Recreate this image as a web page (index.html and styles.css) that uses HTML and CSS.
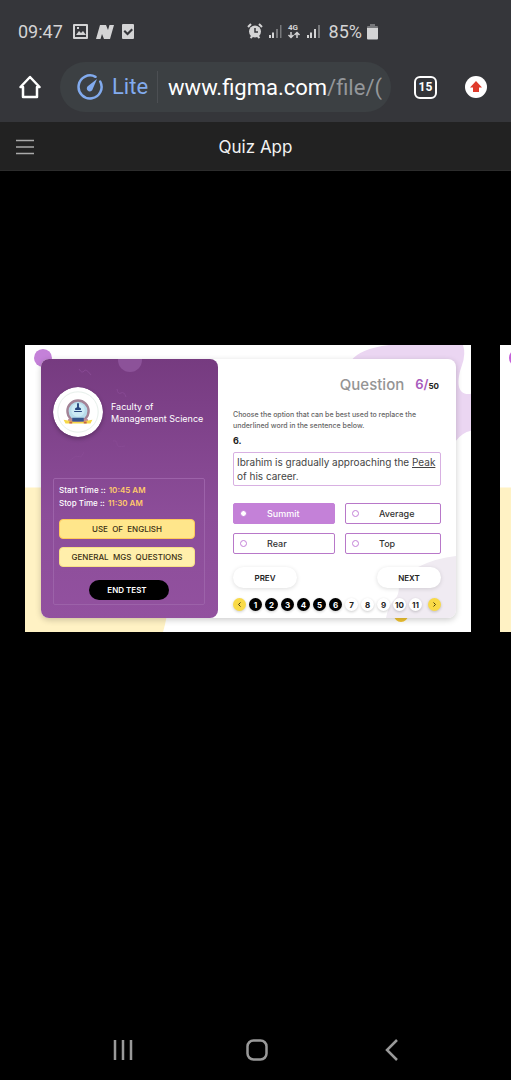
FILE: index.html
```html
<!DOCTYPE html>
<html lang="en">
<head>
<meta charset="utf-8">
<meta name="viewport" content="width=device-width, initial-scale=1">
<title>Quiz App</title>
<link rel="stylesheet" href="styles.css">
</head>
<body>
<div class="screen">
  <header class="browser">
    <div class="status">
      <span class="status-text">09:47</span>
      <svg class="status-icons-left" width="62" height="16" viewBox="0 0 62 16" aria-hidden="true">
        <path fill="#d4d4d5" fill-rule="evenodd" d="M1 0h13q1 0 1 1v13q0 1-1 1H1q-1 0-1-1V1Q0 0 1 0zM2 2v11h11V2zM3 11l3-4 2 2 2-2 3 4zM4 3h2v2H4z"/>
        <path fill="#d4d4d5" d="M27 1h6l2 5 1.500-5H41l-4 14h-6l-2-5-1.500 5H23z"/>
        <path fill="#d4d4d5" fill-rule="evenodd" d="M50 0h10q1 0 1 1v13q0 1-1 1H50q-1 0-1-1V1q0-1 1-1zM52 6l-1.500 1.500 4 4 5.500-5.500L58.500 4.500l-4 4z"/>
      </svg>
      <svg class="status-icons-right" width="76" height="18" viewBox="0 0 76 18" aria-hidden="true">
        <g fill="none" stroke="#d4d4d5" stroke-width="2">
          <path d="M1 4l3-3M12 1l3 3M3.500 15l2-2M12.500 15l-2-2"/>
        </g>
        <circle cx="8" cy="8.500" r="6" fill="#d4d4d5"/>
        <path d="M8 5v4h3" fill="none" stroke="#35363a" stroke-width="1.500"/>
        <path fill="#d4d4d5" d="M22 12h2v3h-2zM25 9.500h2V15h-2z"/>
        <path fill="#77787b" d="M29 6h2v9h-2zM33 2h1.500v13H33z"/>
        <text class="network" x="41" y="7">4G</text>
        <path fill="none" stroke="#d4d4d5" stroke-width="1.500" d="M44 9v5M41.500 12l2.500 2.500 2.500-2.500M50 15v-5M47.500 12l2.500-2.500 2.500 2.500"/>
        <path fill="#d4d4d5" d="M60 12h2v3h-2zM63 9.500h2V15h-2zM67 6h2v9h-2z"/>
        <path fill="#77787b" d="M71 2h2v13h-2z"/>
      </svg>
      <span class="status-text">85%</span>
      <svg width="11" height="16" viewBox="0 0 11 16" aria-hidden="true"><path fill="#77787b" d="M3 0h5v2h2q1 0 1 1v2H0V3q0-1 1-1h2z"/><path fill="#d4d4d5" d="M0 4h11v10.500q0 1-1 1H1q-1 0-1-1z"/></svg>
    </div>
    <div class="toolbar">
      <button class="icon-button" aria-label="Home">
        <svg width="22" height="24" viewBox="0 0 22 24"><path d="M4 12H1.500L11 2l9.500 10H18v10H4z" fill="none" stroke="#fff" stroke-width="2.500" stroke-linejoin="round"/></svg>
      </button>
      <button class="address">
        <svg width="26" height="26" viewBox="0 0 26 26" aria-hidden="true"><path d="M18.500 2.800A11.500 11.500 0 1 0 23.200 7.500" fill="none" stroke="#82abee" stroke-width="2.500" stroke-linecap="round"/><path fill="#82abee" d="M20 5l-9 7a3 3 0 1 0 4.200 4.200z"/></svg>
        <span class="lite">Lite</span>
        <span class="url">www.figma.com<span class="url-path">/file/(</span></span>
      </button>
      <button class="icon-button tabs" aria-label="15 open tabs">15</button>
      <button class="icon-button update" aria-label="Update available">
        <svg width="12" height="12" viewBox="0 0 12 12"><path fill="#df3b2c" d="M6 0l6 6.500H9V11H3V6.500H0z"/></svg>
      </button>
    </div>
  </header>

  <div class="app-bar">
    <button class="menu" aria-label="Menu"><svg width="18" height="16" viewBox="0 0 18 16"><path d="M0 1.500h18M0 8h18M0 14.500h18" stroke="#aaa" stroke-width="1.500"/></svg></button>
    <h1 class="app-title">Quiz App</h1>
  </div>

  <main class="canvas">
    <section class="frame">
      <svg class="backdrop" viewBox="0 0 446 288" preserveAspectRatio="none" aria-hidden="true">
        <path fill="#fff2c4" d="M0 143h130v80q20 25 8 65H0z"/>
        <circle cx="18" cy="13" r="9" fill="#c481d8"/>
        <path fill="#ebd6f2" d="M326 16Q334 4 364 0h74q3 9-1 20c-6 17-5 31 9 29v37q-9 2-15 10l-20-70z"/>
        <circle cx="376" cy="271" r="7" fill="#f3c632"/>
      </svg>
      <article class="card">
        <aside class="panel">
          <svg class="panel-art" viewBox="0 0 177 120" aria-hidden="true">
            <circle cx="89" cy="1" r="12" fill="#8c5299"/>
            <g fill="none" stroke="#884a94" stroke-width="1"><path d="M38 10q3 5 5 2t7 4M76 30q1 6 4 4t5 4M72 82q4-1 4 3t8 2M28 102l7-5 5 1 3-5"/></g>
          </svg>
          <div class="faculty">
            <svg class="crest" viewBox="0 0 52 52" aria-hidden="true">
              <circle cx="26" cy="26" r="26" fill="#fff"/>
              <circle cx="26" cy="26" r="21" fill="none" stroke="#e5eee9"/>
              <circle cx="26" cy="25" r="11" fill="#b8ddeb" stroke="#a38396" stroke-width="2.500"/>
              <circle cx="26" cy="24" r="7" fill="#cdebf5"/>
              <path fill="#28477f" d="M25 17h2v4l2 1v2h-6v-2l2-1zM22 25h8v1h-8z"/>
              <path fill="#c08b94" d="M16 33h20l1 4H15z"/>
              <path fill="#f6d849" d="M11 34l6 1q9 3 18 0l6-1-2 4H13z"/>
              <path fill="#c5654a" d="M17 36h3v2h-3zM32 36h3v2h-3z"/>
              <path fill="#36568c" d="M20 32h12v4H20z"/>
            </svg>
            <h2 class="faculty-name">Faculty of<br>Management Science</h2>
          </div>
          <div class="session">
            <p class="time">Start Time :: <strong>10:45 AM</strong></p>
            <p class="time">Stop Time :: <strong>11:30 AM</strong></p>
            <div class="subjects">
              <button class="subject subject-active">USE&nbsp; OF&nbsp; ENGLISH</button>
              <button class="subject">GENERAL&nbsp; MGS&nbsp; QUESTIONS</button>
            </div>
            <button class="end-test">END TEST</button>
          </div>
        </aside>
        <form class="quiz">
          <svg class="quiz-art" viewBox="0 0 70 62" aria-hidden="true"><path fill="#f0ebf2" d="M0 62q2-12 9-19 4-4 4-13 1-14 19-19Q50 2 70 0v62z"/></svg>
          <h2 class="progress">Question <span class="count"><span class="current">6/</span><span class="total">50</span></span></h2>
          <p class="prompt">Choose the option that can be best used to replace the<br>underlined word in the sentence below.</p>
          <p class="number">6.</p>
          <p class="sentence">Ibrahim is gradually approaching the <u>Peak</u><br>of his career.</p>
          <div class="options">
            <label class="option option-active"><input type="radio" name="answer" checked><span>Summit</span></label>
            <label class="option"><input type="radio" name="answer"><span>Average</span></label>
            <label class="option"><input type="radio" name="answer"><span>Rear</span></label>
            <label class="option"><input type="radio" name="answer"><span>Top</span></label>
          </div>
          <div class="steps"><button type="button" class="step">PREV</button><button type="button" class="step">NEXT</button></div>
          <nav class="pager" aria-label="Questions">
            <button type="button" class="page arrow" aria-label="Earlier questions"><svg width="5" height="5" viewBox="0 0 5 5"><path d="M3.500 .5l-2 2 2 2" fill="none" stroke="#4b3c08"/></svg></button>
            <button type="button" class="page done">1</button>
            <button type="button" class="page done">2</button>
            <button type="button" class="page done">3</button>
            <button type="button" class="page done">4</button>
            <button type="button" class="page done">5</button>
            <button type="button" class="page done">6</button>
            <button type="button" class="page">7</button>
            <button type="button" class="page">8</button>
            <button type="button" class="page">9</button>
            <button type="button" class="page">10</button>
            <button type="button" class="page">11</button>
            <button type="button" class="page arrow last" aria-label="Later questions"><svg width="5" height="5" viewBox="0 0 5 5"><path d="M1.500 .5l2 2-2 2" fill="none" stroke="#4b3c08"/></svg></button>
          </nav>
        </form>
      </article>
    </section>
    <section class="frame" aria-label="Next screen">
      <svg class="backdrop" viewBox="0 0 446 288" preserveAspectRatio="none" aria-hidden="true">
        <path fill="#fff2c4" d="M0 143h130v145H0z"/>
        <circle cx="18" cy="13" r="9" fill="#c45fd8"/>
      </svg>
    </section>
  </main>

  <nav class="system-nav" aria-label="System">
    <button class="icon-button" aria-label="Recent apps"><svg width="22" height="24" viewBox="0 0 22 24"><path d="M3 2v20M11 2v20M19 2v20" stroke="#999" stroke-width="2.500"/></svg></button>
    <button class="icon-button" aria-label="Home screen"><svg width="22" height="24" viewBox="0 0 22 24"><rect x="1.500" y="2.500" width="19" height="19" rx="6" fill="none" stroke="#999" stroke-width="2.500"/></svg></button>
    <button class="icon-button" aria-label="Back"><svg width="22" height="24" viewBox="0 0 22 24"><path d="M16 2L6 12l10 10" fill="none" stroke="#999" stroke-width="2.500"/></svg></button>
  </nav>
</div>
</body>
</html>
```
FILE: styles.css
```css
* { box-sizing: border-box; }
body { margin: 0; background: #000; font-family: Roboto, sans-serif; }
h1, h2, p { margin: 0; font-weight: 400; }
button { margin: 0; padding: 0; border: 0; background: none; color: inherit; font: inherit; white-space: nowrap; }
svg { display: block; flex: none; }

.screen { display: flex; flex-direction: column; min-height: 100vh; overflow: hidden; }

.browser { background: #35363a; padding-bottom: 10px; }
.status { display: flex; align-items: center; height: 62px; padding: 2px 18px 0; color: #d4d4d5; }
.status-text { font-size: 18px; line-height: 20px; }
.status-icons-left { margin-left: 10px; margin-right: auto; }
.status-icons-right { margin-right: 6px; }
.status-text + svg:last-child { margin-left: 5px; margin-right: 115px; }
.network { fill: #d4d4d5; font-size: 8px; font-weight: 700; }

.toolbar { display: flex; align-items: center; padding: 0 24px 0 19px; }
.icon-button { display: flex; align-items: center; justify-content: center; width: 22px; height: 24px; flex: none; }
.address { display: flex; align-items: center; flex: 1; min-width: 0; height: 50px; margin: 0 23px 0 19px; padding: 0 8px 0 17px; border-radius: 25px; background: #3c4043; color: #fff; font-size: 22px; text-align: left; }
.lite { margin-left: 9px; padding-right: 9px; border-right: 1px solid #4c4f53; color: #82abee; line-height: 32px; }
.url { flex: 1; margin-left: 10px; }
.url-path { color: #94979a; }
.tabs { width: 23px; height: 23px; border: 2px solid #fff; border-radius: 6px; color: #fff; font-size: 12px; font-weight: 700; }
.update { height: 22px; margin-left: 28px; border-radius: 50%; background: #fff; }

.app-bar { display: grid; grid-template-columns: 18px 1fr 18px; align-items: center; height: 49px; padding: 1px 16px 0; background: #222; border-bottom: 1px solid #2c2c2c; }
.app-title { color: #f2f2f2; font-family: Inter, sans-serif; font-size: 17px; line-height: 24px; text-align: center; }

.canvas { display: flex; align-items: flex-start; flex: 1; gap: 29px; padding: 174px 0 40px 25px; font-family: Inter, sans-serif; }
.frame { position: relative; flex: 0 0 calc(100% - 40px); min-height: 287px; padding: 14px 15px 14px 16px; background: #fff; }
.backdrop { position: absolute; inset: 0; width: 100%; height: 100%; }
.card { position: relative; display: flex; border-radius: 8px; background: #fff; box-shadow: 0 2px 6px #0003; }

.panel { position: relative; flex: 0 0 177px; padding: 27px 13px 13px 12px; border-radius: 8px; background: linear-gradient(#763b80, #8c4d99 60%, #92519f); color: #fff; overflow: hidden; }
.panel-art { position: absolute; top: 0; left: 0; width: 100%; }
.faculty { position: relative; display: flex; align-items: center; gap: 8px; height: 51px; margin-bottom: 41px; white-space: nowrap; }
.crest { width: 50px; height: 50px; border-radius: 50%; box-shadow: 0 2px 4px #0004; }
.faculty-name { padding-top: 2px; font-size: 9px; font-weight: 400; line-height: 12px; }
.session { padding: 5px 9px 4px 5px; border: 1px solid #9c62a9; border-radius: 2px; }
.time { font-size: 8px; font-weight: 500; line-height: 13px; }
.time strong { margin-left: 1px; color: #ffc96b; font-weight: 600; }
.subjects { display: grid; gap: 8px; margin-top: 9px; }
.subject { height: 20px; border: 1px solid #f7df86; border-radius: 4px; background: #ffefab; color: #3b3014; font-size: 8px; font-weight: 500; }
.subject-active { border-color: #ffc95a; background: #ffe68b; }
.end-test { display: block; width: 80px; height: 20px; margin: 13px auto 0 30px; padding-right: 4px; border-radius: 10px; background: #000; font-size: 8px; font-weight: 600; }

.quiz { position: relative; flex: 1; min-width: 0; padding: 16px 15px 7px; color: #333; }
.quiz-art { position: absolute; right: 0; bottom: 0; width: 70px; height: 62px; border-radius: 0 0 8px 0; }
.quiz > :not(.quiz-art) { position: relative; }
.progress { display: flex; align-items: center; justify-content: flex-end; gap: 11px; height: 20px; padding-right: 2px; color: #949494; font-size: 15px; font-weight: 500; line-height: 20px; }
.current { color: #a95bbd; font-size: 13px; font-weight: 600; }
.total { color: #222; font-size: 8px; font-weight: 700; }
.prompt { margin-top: 14px; color: #666; font-size: 7px; font-weight: 500; line-height: 11px; white-space: nowrap; }
.number { margin-top: 4px; color: #222; font-size: 9px; font-weight: 700; line-height: 12px; }
.sentence { margin-top: 5px; padding: 2px 3px; border: 1px solid #d8b0e2; border-radius: 2px; color: #444; font-size: 10px; line-height: 14px; white-space: nowrap; }
.options { display: grid; grid-template-columns: 102fr 96fr; gap: 9px 10px; margin-top: 17px; }
.option { display: flex; align-items: center; gap: 20px; height: 21px; padding: 0 6px; border: 1px solid #b878c9; border-radius: 2px; font-size: 9px; font-weight: 500; }
.option input { appearance: none; width: 7px; height: 7px; margin: 0; border: 1px solid #c481d8; border-radius: 50%; background: #fff; }
.option-active { border-color: #c481d8; background: #c481d8; color: #fff; }
.steps { display: flex; justify-content: space-between; margin-top: 13px; }
.step { width: 64px; height: 21px; border-radius: 11px; background: #fff; box-shadow: 0 1px 4px #0002; color: #222; font-size: 8px; font-weight: 600; }
.pager { display: flex; gap: 3px; margin-top: 10px; }
.page { display: flex; align-items: center; justify-content: center; width: 13px; height: 13px; border-radius: 50%; background: #fff; box-shadow: 0 1px 3px #0003; color: #222; font-size: 8px; font-weight: 700; }
.done { background: #000; color: #fff; }
.arrow { background: #f9da47; }
.last { margin-left: auto; }

.system-nav { display: flex; justify-content: space-around; height: 60px; padding: 18px 52px 0 56px; }
```
